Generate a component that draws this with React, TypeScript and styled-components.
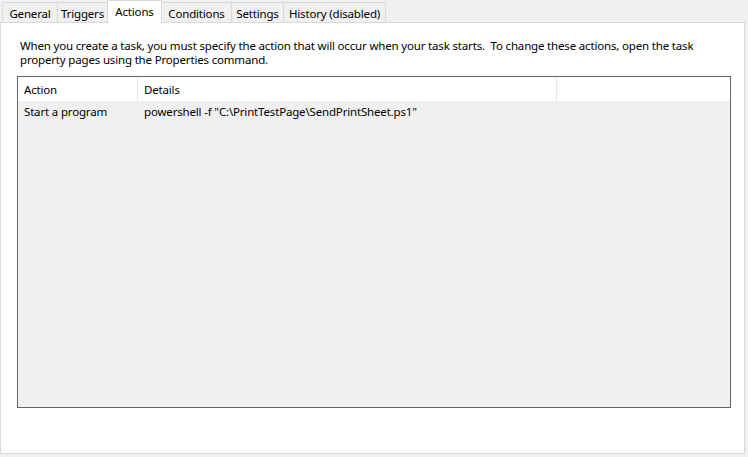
import React from "react";
import styled, { createGlobalStyle } from "styled-components";

const Global = createGlobalStyle`
  html, body { margin: 0; padding: 0; background: #f0f0f0; }
  body {
    font-family: "Noto Sans", "Open Sans", sans-serif;
    font-size: 11.5px;
    letter-spacing: -0.17px;
    color: #000;
  }
`;

const Window = styled.div`
  width: 748px;
  height: 457px;
  box-sizing: border-box;
  padding: 0 3px 3px 0;
  display: flex;
  flex-direction: column;
  background: #f0f0f0;
`;

const TabStrip = styled.div`
  display: flex;
  align-items: flex-end;
  height: 23px;
  padding-left: 2px;
  position: relative;
  z-index: 1;
`;

const Tab = styled.div<{ $active?: boolean; $w: number }>`
  box-sizing: border-box;
  width: ${(p) => p.$w}px;
  height: ${(p) => (p.$active ? "23px" : "21px")};
  padding: ${(p) => (p.$active ? "0 0 2px 0" : "1px 0 0 0")};
  border: 1px solid #d9d9d9;
  border-bottom: ${(p) => (p.$active ? "none" : "1px solid #d9d9d9")};
  margin-left: -1px;
  background: ${(p) => (p.$active ? "#ffffff" : "#f0f0f0")};
  display: flex;
  align-items: center;
  justify-content: center;
  white-space: nowrap;
  position: relative;
  z-index: ${(p) => (p.$active ? 2 : 0)};
  &:first-child { margin-left: 0; }
`;

const Panel = styled.div`
  flex: 1;
  margin-top: -1px;
  background: #ffffff;
  border: 1px solid #d9d9d9;
  display: flex;
  flex-direction: column;
  padding: 16px 13px 45px 16px;
`;

const Description = styled.p`
  margin: 0 0 9px 3px;
  line-height: 14px;
  white-space: nowrap;
`;

const ListView = styled.div`
  flex: 1;
  border: 1px solid #646464;
  background: #f0f0f0;
  display: flex;
  flex-direction: column;
`;

const HeaderRow = styled.div`
  display: grid;
  grid-template-columns: 120px 419px 1fr;
  height: 24px;
  background: #ffffff;
`;

const HeaderCell = styled.div`
  display: flex;
  align-items: center;
  padding-left: 6px;
  border-right: 1px solid #e5e5e5;
  &:last-child { border-right: none; }
`;

const Row = styled.div`
  display: grid;
  grid-template-columns: 120px 419px 1fr;
  height: 20px;
`;

const Cell = styled.div`
  display: flex;
  align-items: center;
  padding-left: 6px;
  white-space: nowrap;
`;

export default function App() {
  return (
    <>
      <Global />
      <Window>
        <TabStrip>
          <Tab $w={56}>General</Tab>
          <Tab $w={51}>Triggers</Tab>
          <Tab $w={55} $active>Actions</Tab>
          <Tab $w={71}>Conditions</Tab>
          <Tab $w={53}>Settings</Tab>
          <Tab $w={103}>History (disabled)</Tab>
        </TabStrip>
        <Panel>
          <Description>
            When you create a task, you must specify the action that will occur when your task starts.&nbsp; To change these actions, open the task
            <br />
            property pages using the Properties command.
          </Description>
          <ListView>
            <HeaderRow>
              <HeaderCell>Action</HeaderCell>
              <HeaderCell>Details</HeaderCell>
              <HeaderCell />
            </HeaderRow>
            <Row>
              <Cell>Start a program</Cell>
              <Cell>powershell -f "C:\PrintTestPage\SendPrintSheet.ps1"</Cell>
              <Cell />
            </Row>
          </ListView>
        </Panel>
      </Window>
    </>
  );
}
